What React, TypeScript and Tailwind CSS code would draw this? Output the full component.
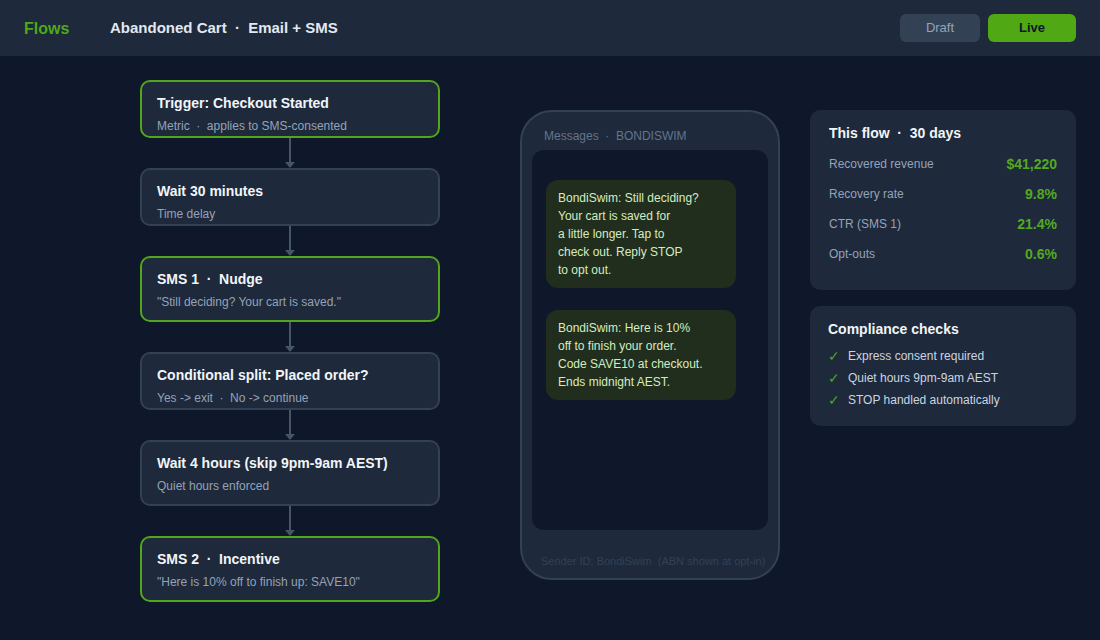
import { ReactNode } from "react";

type Step = {
  title: ReactNode;
  sub: ReactNode;
  live?: boolean;
  h: string;
};

function Dot() {
  return <span className="mx-[0.55em]">·</span>;
}

const steps: Step[] = [
  {
    title: "Trigger: Checkout Started",
    sub: (
      <>
        Metric<Dot />applies to SMS-consented
      </>
    ),
    live: true,
    h: "h-[58px]",
  },
  { title: "Wait 30 minutes", sub: "Time delay", h: "h-[58px]" },
  {
    title: (
      <>
        SMS 1<Dot />Nudge
      </>
    ),
    sub: "\"Still deciding? Your cart is saved.\"",
    live: true,
    h: "h-[66px]",
  },
  {
    title: "Conditional split: Placed order?",
    sub: (
      <>
        Yes -&gt; exit<Dot />No -&gt; continue
      </>
    ),
    h: "h-[58px]",
  },
  { title: "Wait 4 hours (skip 9pm-9am AEST)", sub: "Quiet hours enforced", h: "h-[66px]" },
  {
    title: (
      <>
        SMS 2<Dot />Incentive
      </>
    ),
    sub: "\"Here is 10% off to finish up: SAVE10\"",
    live: true,
    h: "h-[66px]",
  },
];

const stats = [
  ["Recovered revenue", "$41,220"],
  ["Recovery rate", "9.8%"],
  ["CTR (SMS 1)", "21.4%"],
  ["Opt-outs", "0.6%"],
];

const checks = ["Express consent required", "Quiet hours 9pm-9am AEST", "STOP handled automatically"];

function Connector() {
  return (
    <div className="flex h-[30px] flex-col items-center">
      <div className="w-[2px] flex-1 bg-[#475569]" />
      <svg width="10" height="6" viewBox="0 0 10 6" className="block">
        <path d="M0 0 L10 0 L5 6 Z" fill="#475569" />
      </svg>
    </div>
  );
}

function StepCard({ step }: { step: Step }) {
  return (
    <div
      className={`${step.h} rounded-[10px] border-2 bg-[#1e293b] px-[15px] pt-[12px] ${
        step.live ? "border-[#52a51c]" : "border-[#334155]"
      }`}
    >
      <div className="text-[14px] leading-[18px] font-bold text-[#f1f5f9]">{step.title}</div>
      <div className="mt-[6px] text-[12px] leading-[16px] text-[#94a3b8]">{step.sub}</div>
    </div>
  );
}

export default function App() {
  return (
    <div
      className="min-h-[640px] bg-[#0f172a]"
      style={{ fontFamily: '"Liberation Sans", Arial, sans-serif' }}
    >
      <header className="flex h-[56px] items-center bg-[#1e293b] px-6">
        <div className="w-[86px] pt-[1px] text-[16px] font-bold text-[#4fa81a]">Flows</div>
        <div className="pt-[1px] text-[15px] font-bold text-[#e2e8f0]">
          Abandoned Cart<Dot />Email + SMS
        </div>
        <div className="ml-auto flex gap-2">
          <button
            type="button"
            className="h-[28px] w-[80px] rounded-[6px] bg-[#334155] text-[13px] text-[#94a3b8]"
          >
            Draft
          </button>
          <button
            type="button"
            className="h-[28px] w-[88px] rounded-[6px] bg-[#4fa814] text-[13px] font-bold text-[#0f172a]"
          >
            Live
          </button>
        </div>
      </header>

      <main className="flex items-start pt-6 pl-[140px]">
        <div className="w-[300px]">
          {steps.map((s, i) => (
            <div key={i}>
              {i > 0 && <Connector />}
              <StepCard step={s} />
            </div>
          ))}
        </div>

        <div className="mt-[30px] ml-[80px] flex h-[470px] w-[260px] flex-col rounded-[32px] border-2 border-[#334155] bg-[#1e293b] px-[10px]">
          <div className="pt-[16px] pl-[12px] text-[12px] leading-[16px] text-[#64748b]">
            Messages<Dot />BONDISWIM
          </div>
          <div className="mt-[6px] h-[380px] rounded-[12px] bg-[#0f172a] px-[14px] pt-[30px]">
            <div className="w-[190px] rounded-[12px] bg-[#212e1d] px-[12px] py-[9px] text-[12px] leading-[18px] text-[#d4ecc0]">
              BondiSwim: Still deciding?
              <br />
              Your cart is saved for
              <br />
              a little longer. Tap to
              <br />
              check out. Reply STOP
              <br />
              to opt out.
            </div>
            <div className="mt-[22px] w-[190px] rounded-[12px] bg-[#212e1d] px-[12px] py-[9px] text-[12px] leading-[18px] text-[#d4ecc0]">
              BondiSwim: Here is 10%
              <br />
              off to finish your order.
              <br />
              Code SAVE10 at checkout.
              <br />
              Ends midnight AEST.
            </div>
          </div>
          <div className="mt-[24px] pl-[9px] text-[11px] leading-[14px] whitespace-pre text-[#334155]">
            Sender ID: BondiSwim  (ABN shown at opt-in)
          </div>
        </div>

        <div className="mt-[30px] ml-[30px] flex w-[266px] flex-col gap-4">
          <div className="h-[180px] rounded-[10px] bg-[#1e293b] px-[19px] pt-[14px]">
            <div className="text-[14px] leading-[18px] font-bold text-[#f1f5f9]">
              This flow<Dot />30 days
            </div>
            <div className="mt-[7px]">
              {stats.map(([k, v]) => (
                <div key={k} className="flex h-[30px] items-center justify-between">
                  <span className="text-[12px] text-[#94a3b8]">{k}</span>
                  <span className="text-[14px] font-bold text-[#55a822]">{v}</span>
                </div>
              ))}
            </div>
          </div>

          <div className="h-[120px] rounded-[10px] bg-[#1e293b] px-[18px] pt-[14px]">
            <div className="text-[14px] leading-[18px] font-bold text-[#f1f5f9]">Compliance checks</div>
            <div className="mt-[7px]">
              {checks.map((c) => (
                <div key={c} className="flex h-[22px] items-center text-[12px] text-[#cbd5e1]">
                  <span className="w-[20px] text-[14px] font-light text-[#4fa81a]">✓</span>
                  {c}
                </div>
              ))}
            </div>
          </div>
        </div>
      </main>
    </div>
  );
}
